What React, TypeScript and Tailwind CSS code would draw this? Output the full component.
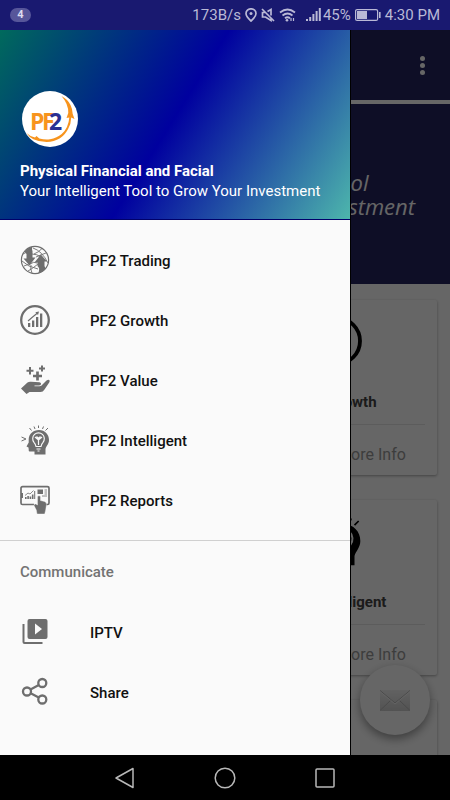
import type { ReactNode } from "react";

type MenuItem = {
  label: string;
  icon: ReactNode;
};

type InfoCard = {
  title: string;
  icon?: ReactNode;
};

function TradingIcon() {
  return (
    <svg viewBox="0 0 30 30" className="h-full w-full" aria-hidden="true">
      <g fill="none" stroke="currentColor" strokeWidth=".9">
        <circle cx="15" cy="15" r="13.600" strokeWidth="1.200" />
        <path d="M12 9Q17 9 21 12M13 3Q22 6 28 18M14 9Q19 7 22 3.500M16 12Q23 9 26 8M2 16Q8 22 18 24M10 19Q14 16 17 18M4 21Q9 20 12 16M8 26Q12 24 18 19M11 20Q10 24 12 28M3 9L7 7" />
      </g>
      <path
        fill="currentColor"
        d="M4.500 6.500Q8 2.500 12.500 1.500Q11.500 4 12.500 6V12.500H15.500L9.500 20.500L3.500 13.500H6.500V9ZM20.800 9.500L27 16.500H24.500V21L25.500 23.500Q22 28 18 28.500Q19.500 26 19 23L17.500 21V17.500H14.500Z"
      />
    </svg>
  );
}

function GrowthIcon() {
  return (
    <svg viewBox="0 0 30 30" className="h-full w-full" aria-hidden="true">
      <circle cx="15" cy="15" r="13.800" fill="none" stroke="currentColor" strokeWidth="2.300" />
      <path fill="currentColor" d="M8 18h2.300v4H8zM12 15.500h2.300V22H12zM16 12h2.300v10H16zM20 8.500h2.300V22H20z" />
      <path fill="none" stroke="currentColor" strokeWidth="1.100" d="M8 16L12 12.500L17.500 8" />
      <path fill="currentColor" d="M15.300 7.300L19 6.500L18 10Z" />
    </svg>
  );
}

function ValueIcon() {
  return (
    <svg viewBox="0 0 30 30" className="h-full w-full" aria-hidden="true">
      <path
        fill="none"
        stroke="currentColor"
        strokeWidth="2"
        d="M10 2v7.500M6.500 5.700h7M22 .500v6M19 3.500h6"
      />
      <path fill="none" stroke="currentColor" strokeWidth="2.700" d="M17.500 6.500v9M13 11h9" />
      <path
        fill="currentColor"
        d="M1 23.500L7.500 17.500Q9 16.500 11 16.800L19.500 17.200Q21.500 17.500 21 19.200Q20.500 20.500 18.500 20.500H14.500V21.200H19.500Q21.500 21 22.500 19.500L26.500 15.500Q28.500 14 29.500 15.200Q30 16 29.200 17.500L24.500 24.500Q23 27 20.500 27H9.500L6.500 29Z"
      />
    </svg>
  );
}

function IntelligentIcon() {
  return (
    <svg viewBox="0 0 30 30" className="h-full w-full" aria-hidden="true">
      <path
        fill="currentColor"
        d="M19 5C25 5 29 9.500 29 15C29 19 26 21.500 25.500 24V29.500H14.500V26.500H9.500Q8.500 26.500 8.700 24.500L8.500 22.500L6.500 21.500L8.700 17.500V14C9 9 13 5 19 5Z"
      />
      <path
        fill="none"
        stroke="currentColor"
        strokeWidth="1"
        d="M1.500 12L6 14L1.500 16M9.500 3L11.500 5.500M14 1.500L15 4M18.500 .500V3M23.500 1.500L22.500 4M28 3L25.500 5.500"
      />
      <path
        className="stroke-[#fafafa]"
        fill="none"
        strokeWidth="1.200"
        d="M16 21.500Q15.500 19 14 17.300A5.800 5.800 0 1 1 23 17.300Q21.500 19 21 21.500ZM16.500 24H20.500M17.500 26H19.500M18.500 20V14M15 12L18.500 15L22 12M16.500 11.500L18.500 13.500L20.500 11.500"
      />
    </svg>
  );
}

function ReportsIcon() {
  return (
    <svg viewBox="0 0 30 30" className="h-full w-full" aria-hidden="true">
      <path
        fill="none"
        stroke="currentColor"
        strokeWidth="1.700"
        d="M14 19.500H2.500Q1 19.500 1 18V3Q1 1.700 2.500 1.700H27.500Q29 1.700 29 3V18Q29 19.500 27.500 19.500H25"
      />
      <path
        fill="currentColor"
        d="M1 8h2v5H1zM5 12h1.600v2H5zM7.300 11h1.600v3H7.300zM9.600 11.500h1.600v2.500H9.600zM11.900 9.500h1.600V14h-1.600zM14.200 6h1v8h-1zM17.500 4.500h5.500v4.500h-5.500z"
      />
      <path
        fill="none"
        stroke="currentColor"
        strokeWidth=".8"
        d="M5 10.500L8 8L10 9L13.500 5.500M24.500 5h2.500M24.500 7h2.500M24.500 9h2.500M22 11h5"
      />
      <path
        fill="currentColor"
        className="stroke-[#fafafa]"
        strokeWidth=".4"
        d="M17.500 12Q17.500 10.700 19 10.700T20.500 12V15.500L24.500 16.500Q26.700 17 26.500 19.500L25.700 25L24.700 29H17L16.300 25L14 20.500Q14 18.500 15.800 19L17.500 20Z"
      />
    </svg>
  );
}

function VideoLibraryIcon() {
  return (
    <svg viewBox="0 0 30 30" className="h-full w-full" aria-hidden="true">
      <path
        fill="currentColor"
        d="M2.500 7H4.500V25H22.500V27H4.500Q2.500 27 2.500 25ZM9.500 2H25.500Q27.500 2 27.500 4V20Q27.500 22 25.500 22H9.500Q7.500 22 7.500 20V4Q7.500 2 9.500 2ZM15 6.500V17.500L22 12Z"
        fillRule="evenodd"
      />
    </svg>
  );
}

function ShareIcon() {
  return (
    <svg viewBox="0 0 30 30" className="h-full w-full" aria-hidden="true">
      <g fill="none" stroke="currentColor" strokeWidth="2.300">
        <circle cx="7" cy="14.500" r="4" />
        <circle cx="22.300" cy="6" r="4" />
        <circle cx="22.300" cy="22.500" r="4" />
        <path d="M10.500 12.500L18.800 8M10.700 16.300L18.700 20.500" />
      </g>
    </svg>
  );
}

function Logo() {
  return (
    <svg viewBox="0 0 56 56" className="h-14 w-14" role="img" aria-label="PF2">
      <circle cx="28" cy="28" r="28" fill="#fff" />
      <path
        fill="#f7941d"
        d="M39.500 5Q46 8.500 48.500 14Q50.500 18 50.700 23L52.500 28L49.200 26.500Q49 33 46.300 37.500Q43.500 43.500 38 47.300Q32 51 24.700 51Q17 51 11.300 48.300Q7 46 4.500 42Q8.500 45.800 13 46.500L14.500 45L17.300 47.500Q23 49 28 48.300Q35 47 39.700 43Q46.500 37 47.300 26.500L44.500 27L46.300 22Q46.500 13 39.500 5Z"
      />
      <text y="39" fontSize="23" fontWeight="700" fontFamily="Open Sans, sans-serif">
        <tspan x="8" fill="#f7941d">P</tspan>
        <tspan x="20" fill="#f7941d">F</tspan>
        <tspan x="27" fill="#2a2f92">2</tspan>
      </text>
    </svg>
  );
}

const MAIN_ITEMS: MenuItem[] = [
  { label: "PF2 Trading", icon: <TradingIcon /> },
  { label: "PF2 Growth", icon: <GrowthIcon /> },
  { label: "PF2 Value", icon: <ValueIcon /> },
  { label: "PF2 Intelligent", icon: <IntelligentIcon /> },
  { label: "PF2 Reports", icon: <ReportsIcon /> },
];

const COMMUNICATE_ITEMS: MenuItem[] = [
  { label: "IPTV", icon: <VideoLibraryIcon /> },
  { label: "Share", icon: <ShareIcon /> },
];

const CARDS: InfoCard[] = [
  { title: "PF2 Trading", icon: <TradingIcon /> },
  { title: "PF2 Growth", icon: <GrowthIcon /> },
  { title: "PF2 Value", icon: <ValueIcon /> },
  { title: "PF2 Intelligent", icon: <IntelligentIcon /> },
  { title: "PF2 Reports", icon: <ReportsIcon /> },
  { title: "IPTV" },
];

function StatusBar() {
  return (
    <div className="flex h-[30px] shrink-0 items-center justify-between bg-[#191970] px-2.5 text-[15px] text-[#bab9d6]">
      <span className="flex h-3.5 w-[21px] items-center justify-center rounded-full bg-[#57569a] text-[11px] font-bold text-[#dddcf0]">
        4
      </span>
      <div className="flex items-center gap-1">
        <span>173B/s</span>
        <svg viewBox="0 0 12 14" className="h-3.5 w-3" fill="none" stroke="currentColor" strokeWidth="1.700" aria-hidden="true">
          <path d="M6 13Q1 8.500 1 5.500A5 4.700 0 0 1 11 5.500Q11 8.500 6 13Z" />
          <circle cx="6" cy="5.500" r="1.500" fill="currentColor" stroke="none" />
        </svg>
        <svg viewBox="0 0 14 14" className="h-3.5 w-3.5" fill="none" stroke="currentColor" strokeWidth="1.700" aria-hidden="true">
          <path d="M1 1L13 13M4.500 4.500H1.500V9H4.500L10 12.500V10M6.500 3.500L10 1.500V7.500" />
        </svg>
        <svg viewBox="0 0 17 14" className="h-3.5 w-[17px]" fill="none" stroke="currentColor" strokeWidth="1.800" aria-hidden="true">
          <path d="M1 4.500Q8.500 -1.500 16 4.500M3.500 7.500Q8.500 3.500 13.500 7.500M6 10.300Q8.500 8.300 11 10.300" />
          <circle cx="8" cy="12.300" r="1.300" fill="currentColor" stroke="none" />
          <path strokeWidth="1.200" d="M12 10V13M14.500 10V13" />
        </svg>
        <svg viewBox="0 0 15 14" className="ml-1.5 h-3.5 w-[15px]" fill="currentColor" aria-hidden="true">
          <path d="M0 11h2v2H0zM3.200 9h2v4h-2zM6.400 6h2v7h-2zM9.600 3h2v10h-2zM12.800 0h2v13h-2z" />
        </svg>
        <span className="-ml-0.5">45%</span>
        <svg viewBox="0 0 26 14" className="h-3.5 w-[26px]" aria-hidden="true">
          <rect x=".6" y="1.600" width="22" height="10.800" rx="1.500" fill="none" stroke="currentColor" strokeWidth="1.200" />
          <path fill="currentColor" d="M2 3h10v8H2zM24 4h1.600v6H24z" />
        </svg>
        <span>4:30 PM</span>
      </div>
    </div>
  );
}

function Card({ title, icon }: InfoCard) {
  return (
    <article className="flex h-[175px] flex-col items-center rounded-xs bg-white px-3 pt-4 shadow-[0_1px_3px_rgba(0,0,0,0.35)]">
      <div className="h-[50px] w-[50px] text-black">{icon}</div>
      <h2 className="mt-6 text-[15px] leading-6 font-bold text-[#444]">{title}</h2>
      <hr className="mt-2.5 w-full border-[#e6e6e6]" />
      <a href="#more" className="mt-[18px] text-base leading-6 text-[#999]">
        Press for more Info
      </a>
    </article>
  );
}

function HomePage() {
  return (
    <main className="h-full overflow-hidden bg-white">
      <header className="flex h-[70px] items-center justify-end bg-[#25235f] pr-[18px]">
        <button type="button" aria-label="More options" className="flex h-10 w-5 flex-col items-center justify-center gap-0.5">
          <span className="h-[5px] w-[5px] rounded-full bg-white" />
          <span className="h-[5px] w-[5px] rounded-full bg-white" />
          <span className="h-[5px] w-[5px] rounded-full bg-white" />
        </button>
      </header>
      <section className="mt-1 flex h-[180px] items-center bg-[#25235f] pl-[175px]">
        <p className="font-['Open_Sans',sans-serif] text-[22px] leading-6 whitespace-nowrap text-white italic">
          Your Intelligent Tool
          <br />
          to Grow Your Investment
        </p>
      </section>
      <div className="grid grid-cols-2 gap-[25px] px-[13px] pt-4">
        {CARDS.map((card) => (
          <Card key={card.title} {...card} />
        ))}
      </div>
      <button
        type="button"
        aria-label="Send message"
        className="absolute right-5 bottom-5 flex h-[70px] w-[70px] items-center justify-center rounded-full bg-white shadow-[0_4px_10px_rgba(0,0,0,0.4)]"
      >
        <svg viewBox="0 0 30 21" className="h-[21px] w-[30px]" aria-hidden="true">
          <defs>
            <linearGradient id="envelope" x1="0" y1="0" x2="0" y2="1">
              <stop offset="0" stopColor="#f4f4f4" />
              <stop offset="1" stopColor="#cecece" />
            </linearGradient>
          </defs>
          <rect width="30" height="21" rx="1" fill="url(#envelope)" />
          <path d="M0 .500L15 13L30 .500M0 20.500L11 10M30 20.500L19 10" fill="none" stroke="#b8b8b8" />
          <path d="M0 1.500L15 14L30 1.500" fill="none" stroke="#fff" strokeWidth=".8" />
        </svg>
      </button>
    </main>
  );
}

function MenuList({ items }: { items: MenuItem[] }) {
  return (
    <ul>
      {items.map((item) => (
        <li key={item.label}>
          <button type="button" className="flex h-[60px] w-full items-center gap-10 px-5 text-left">
            <span className="h-[30px] w-[30px] text-[#6e6e6e]">{item.icon}</span>
            <span className="pt-0.5 text-[15px] font-medium text-[#111]">{item.label}</span>
          </button>
        </li>
      ))}
    </ul>
  );
}

function Drawer() {
  return (
    <nav className="absolute inset-y-0 left-0 box-content w-[350px] max-w-[85%] border-r border-black bg-[#fafafa]">
      <header className="flex h-[190px] flex-col justify-end border-b border-[#00006a] bg-[linear-gradient(122deg,#006a5c,#00009f_49%,#4db6ac)] px-5 pb-[18px] text-[15px] leading-5 text-white">
        <div className="mb-3.5 ml-0.5">
          <Logo />
        </div>
        <p className="font-bold">Physical Financial and Facial</p>
        <p>Your Intelligent Tool to Grow Your Investment</p>
      </header>
      <div className="py-2.5">
        <MenuList items={MAIN_ITEMS} />
      </div>
      <section className="border-t border-[#d0d0d0]">
        <h2 className="h-[61px] px-5 text-[15px] leading-[62px] font-medium text-[#737373]">Communicate</h2>
        <MenuList items={COMMUNICATE_ITEMS} />
      </section>
    </nav>
  );
}

function NavigationBar() {
  return (
    <div className="flex h-[45px] shrink-0 items-center justify-center bg-black text-[#b8b8b8]">
      <button type="button" aria-label="Back" className="flex w-[100px] justify-center">
        <svg viewBox="0 0 22 22" className="h-[22px] w-[22px]" fill="none" stroke="currentColor" strokeWidth="1.500">
          <path strokeLinejoin="round" d="M19 1.500V20.500L2 11Z" />
        </svg>
      </button>
      <button type="button" aria-label="Home" className="flex w-[100px] justify-center">
        <svg viewBox="0 0 22 22" className="h-[22px] w-[22px]" fill="none" stroke="currentColor" strokeWidth="1.500">
          <circle cx="11" cy="11" r="9.800" />
        </svg>
      </button>
      <button type="button" aria-label="Recent apps" className="flex w-[100px] justify-center">
        <svg viewBox="0 0 22 22" className="h-[22px] w-[22px]" fill="none" stroke="currentColor" strokeWidth="1.500">
          <rect x="2" y="2" width="18" height="18" rx="1" />
        </svg>
      </button>
    </div>
  );
}

export default function App() {
  return (
    <div className="flex h-screen flex-col font-[Roboto,sans-serif]">
      <StatusBar />
      <div className="relative min-h-0 flex-1 overflow-hidden">
        <HomePage />
        <div className="absolute inset-0 bg-black/60" />
        <Drawer />
      </div>
      <NavigationBar />
    </div>
  );
}
